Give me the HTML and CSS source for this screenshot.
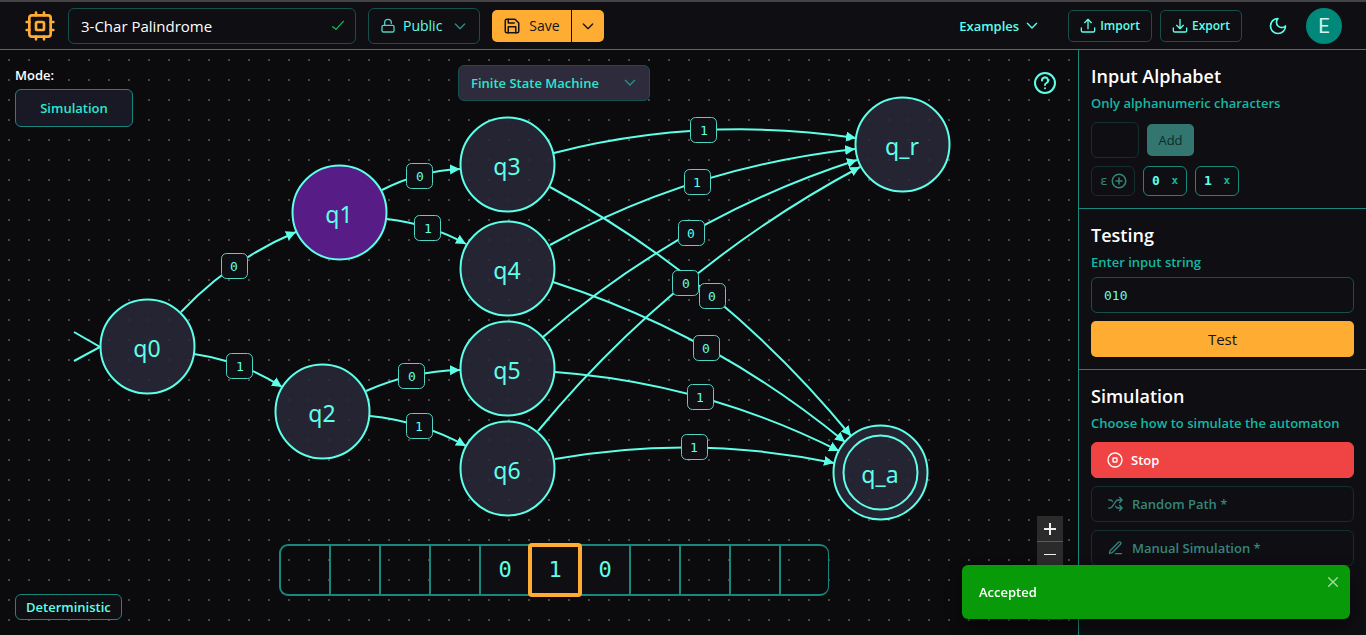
FILE: index.html
```html
<!DOCTYPE html>
<html lang="en">
<head>
<meta charset="utf-8">
<meta name="viewport" content="width=device-width, initial-scale=1">
<title>3-Char Palindrome</title>
<link rel="stylesheet" href="styles.css">
</head>
<body>
<header class="topbar">
  <svg class="icon logo" width="32" height="32" viewBox="0 0 24 24"><rect x="4" y="4" width="16" height="16" rx="2"/><rect x="9" y="9" width="6" height="6" rx="1"/><path d="M15 2v2M15 20v2M2 15h2M2 9h2M20 15h2M20 9h2M9 2v2M9 20v2"/></svg>
  <div class="field project">
    <input class="input project-name" type="text" value="3-Char Palindrome" aria-label="Project name">
    <svg class="icon field-icon saved" width="16" height="16" viewBox="0 0 24 24"><path d="M20 5 9 17l-5-4"/></svg>
  </div>
  <div class="field">
    <svg class="icon lock" width="16" height="16" viewBox="0 0 24 24"><rect x="3" y="11" width="18" height="10" rx="2"/><path d="M7 11V7a5 5 0 0 1 10 0v1"/></svg>
    <select class="input visibility" aria-label="Visibility"><option>Public</option></select>
    <svg class="icon field-icon dim" width="16" height="16" viewBox="0 0 24 24"><path d="m5 9 7 7 7-7"/></svg>
  </div>
  <div class="split">
    <button class="btn primary save"><svg class="icon" width="18" height="18" viewBox="0 0 24 24"><path d="M5 3h11l5 5v11a2 2 0 0 1-2 2H5a2 2 0 0 1-2-2V5a2 2 0 0 1 2-2z"/><path d="M17 21v-8H7v8M7 3v5h8"/></svg>Save</button>
    <button class="btn primary save-more" aria-label="Save options"><svg class="icon" width="16" height="16" viewBox="0 0 24 24"><path d="m5 9 7 7 7-7"/></svg></button>
  </div>
  <button class="btn examples">Examples<svg class="icon" width="16" height="16" viewBox="0 0 24 24"><path d="m5 8 7 7 7-7"/></svg></button>
  <div class="transfer">
    <button class="btn outline"><svg class="icon" width="16" height="16" viewBox="0 0 24 24"><path d="M22 15v4a2 2 0 0 1-2 2H4a2 2 0 0 1-2-2v-4M17 7l-5-5-5 5M12 3v13"/></svg>Import</button>
    <button class="btn outline"><svg class="icon" width="16" height="16" viewBox="0 0 24 24"><path d="M22 15v4a2 2 0 0 1-2 2H4a2 2 0 0 1-2-2v-4M7 11l5 5 5-5M12 15V2"/></svg>Export</button>
  </div>
  <button class="btn theme" aria-label="Toggle theme"><svg class="icon" width="20" height="20" viewBox="0 0 24 24"><path d="M12 3a6 6 0 0 0 9 9 9 9 0 1 1-9-9Z"/></svg></button>
  <button class="avatar" aria-label="Account">E</button>
</header>

<div class="workspace">
  <main class="canvas">
    <svg class="graph" width="100%" height="100%" role="img" aria-label="State diagram">
      <defs>
        <marker id="arrow" markerUnits="userSpaceOnUse" markerWidth="12" markerHeight="12" refX="10" refY="5" orient="auto"><path class="tip" d="M0 0 10 5 0 10z"/></marker>
      </defs>
      <g transform="translate(0 -50)">
        <path class="line" d="M74 332 100 347 74 361"/>
        <g class="edges">
          <path d="M181 312Q230 260 296 232"/>
          <path d="M194 354Q242 361 282 387"/>
          <path d="M382 190Q419 171 460 169"/>
          <path d="M387 219Q430 224 466 244"/>
          <path d="M366 391Q411 371 460 370"/>
          <path d="M370 416Q420 421 466 446"/>
          <path d="M554 153Q702 115 856 138"/>
          <path d="M550 245Q692 167 855 149"/>
          <path d="M543 337Q683 216 857 160"/>
          <path d="M538 431Q673 267 860 167"/>
          <path d="M550 187Q724 281 851 436"/>
          <path d="M553 282Q714 334 845 442"/>
          <path d="M555 372Q704 383 839 451"/>
          <path d="M555 459Q694 434 834 463"/>
        </g>
        <g class="states">
          <circle cx="147.500" cy="346.500" r="47"/><text x="147" y="357">q0</text>
          <circle class="active" cx="339.500" cy="212.500" r="47"/><text x="339" y="223">q1</text>
          <circle cx="322.500" cy="411.500" r="47"/><text x="322" y="422">q2</text>
          <circle cx="507.500" cy="164.500" r="47"/><text x="507" y="175">q3</text>
          <circle cx="507.500" cy="268.500" r="47"/><text x="507" y="279">q4</text>
          <circle cx="507.500" cy="368.500" r="47"/><text x="507" y="379">q5</text>
          <circle cx="507.500" cy="468.500" r="47"/><text x="507" y="479">q6</text>
          <circle cx="902.500" cy="144.500" r="47"/><text x="902" y="155">q_r</text>
          <circle cx="880.500" cy="472.500" r="47"/><circle class="accept" cx="880.500" cy="472.500" r="37"/><text x="880" y="483">q_a</text>
        </g>
        <g class="labels">
          <rect x="221.500" y="253.500" width="26" height="25" rx="5"/><text x="234" y="271">0</text>
          <rect x="226.500" y="353.500" width="26" height="25" rx="5"/><text x="240" y="371">1</text>
          <rect x="406.500" y="163.500" width="26" height="25" rx="5"/><text x="420" y="181">0</text>
          <rect x="414.500" y="215.500" width="26" height="25" rx="5"/><text x="428" y="233">1</text>
          <rect x="398.500" y="363.500" width="26" height="25" rx="5"/><text x="412" y="381">0</text>
          <rect x="406.500" y="413.500" width="26" height="25" rx="5"/><text x="419" y="431">1</text>
          <rect x="690.500" y="117.500" width="26" height="25" rx="5"/><text x="704" y="135">1</text>
          <rect x="684.500" y="169.500" width="26" height="25" rx="5"/><text x="697" y="187">1</text>
          <rect x="678.500" y="220.500" width="26" height="25" rx="5"/><text x="691" y="238">0</text>
          <rect x="672.500" y="270.500" width="26" height="25" rx="5"/><text x="686" y="288">0</text>
          <rect x="699.500" y="283.500" width="26" height="25" rx="5"/><text x="712" y="301">0</text>
          <rect x="693.500" y="335.500" width="26" height="25" rx="5"/><text x="706" y="353">0</text>
          <rect x="687.500" y="384.500" width="26" height="25" rx="5"/><text x="700" y="402">1</text>
          <rect x="681.500" y="434.500" width="26" height="25" rx="5"/><text x="694" y="452">1</text>
        </g>
      </g>
    </svg>

    <div class="overlay">
      <div class="mode">
        <span class="mode-label">Mode:</span>
        <button class="btn mode-btn">Simulation</button>
      </div>
      <div class="field machine">
        <select class="input machine-select" aria-label="Machine type"><option>Finite State Machine</option></select>
        <svg class="icon field-icon dim" width="16" height="16" viewBox="0 0 24 24"><path d="m5 8 7 7 7-7"/></svg>
      </div>
      <button class="btn help" aria-label="Help"><svg class="icon" width="24" height="24" viewBox="0 0 24 24"><circle cx="12" cy="12" r="10"/><path d="M9 9.500a3 3 0 1 1 4.500 2.500c-1 .6-1.500 1-1.500 2M12 17.200v.1"/></svg></button>

      <span class="badge">Deterministic</span>
      <div class="tape">
        <span class="cell"></span><span class="cell"></span><span class="cell"></span><span class="cell"></span>
        <span class="cell filled">0</span><span class="cell filled head">1</span><span class="cell filled">0</span>
        <span class="cell"></span><span class="cell"></span><span class="cell"></span><span class="cell"></span>
      </div>
      <div class="zoom">
        <button class="zoom-btn" aria-label="Zoom in"><svg width="12" height="12" viewBox="0 0 12 12"><path d="M6 0v12M0 6h12"/></svg></button>
        <button class="zoom-btn" aria-label="Zoom out"><svg width="12" height="12" viewBox="0 0 12 12"><path class="thin" d="M0 5.500h12"/></svg></button>
        <button class="zoom-btn" aria-label="Fit view"></button>
        <button class="zoom-btn" aria-label="Lock"></button>
      </div>
    </div>
  </main>

  <aside class="sidebar">
    <section class="section">
      <h2 class="heading">Input Alphabet</h2>
      <label class="hint" for="symbol">Only alphanumeric characters</label>
      <div class="row">
        <input class="input symbol" id="symbol" type="text" maxlength="1">
        <button class="btn add">Add</button>
      </div>
      <div class="row chips">
        <button class="chip epsilon">ε<svg class="icon" width="18" height="18" viewBox="0 0 24 24"><circle cx="12" cy="12" r="9"/><path d="M12 8v8M8 12h8"/></svg></button>
        <button class="chip">0<span class="remove">x</span></button>
        <button class="chip">1<span class="remove">x</span></button>
      </div>
    </section>
    <section class="section testing">
      <h2 class="heading">Testing</h2>
      <label class="hint" for="word">Enter input string</label>
      <input class="input word" id="word" type="text" value="010">
      <button class="btn primary test">Test</button>
    </section>
    <section class="section">
      <h2 class="heading">Simulation</h2>
      <p class="hint">Choose how to simulate the automaton</p>
      <div class="actions">
        <button class="btn action stop"><svg class="icon" width="16" height="16" viewBox="0 0 24 24"><circle cx="12" cy="12" r="10.500"/><rect x="9" y="9" width="6" height="6" rx="1"/></svg>Stop</button>
        <button class="btn action"><svg class="icon" width="17" height="16" viewBox="0 0 24 24"><path d="M2 18h1.400c1.300 0 2.500-.6 3.300-1.700l6.100-8.600c.7-1.100 2-1.700 3.300-1.700H22M18 2l4 4-4 4M2 6h1.900c1.500 0 2.900.9 3.600 2.200M22 18h-5.900c-1.300 0-2.600-.7-3.300-1.800l-.5-.8M18 14l4 4-4 4"/></svg>Random Path *</button>
        <button class="btn action"><svg class="icon" width="17" height="16" viewBox="0 0 24 24"><path d="M12 20.500h9M16.500 3.500a2.100 2.100 0 0 1 3 3L7 19l-4 1 1-4Z"/></svg>Manual Simulation *</button>
      </div>
    </section>
  </aside>
</div>

<div class="toast" role="status">
  <span>Accepted</span>
  <button class="close" aria-label="Dismiss"><svg class="icon" width="16" height="16" viewBox="0 0 24 24"><path d="M18.500 5.500l-13 13M5.500 5.500l13 13"/></svg></button>
</div>
</body>
</html>
```
FILE: styles.css
```css
:root {
  --bg: #0b0b0d;
  --panel: #0e0e13;
  --teal: #5effe8;
  --teal-mid: #14b8a2;
  --line: #1a877c;
  --line-dim: #16504c;
  --orange: #ffac33;
  --mono: "DejaVu Sans Mono", monospace;
}
* { box-sizing: border-box; }
body {
  margin: 0;
  height: 100vh;
  display: flex;
  flex-direction: column;
  overflow: hidden;
  background: var(--bg);
  color: #fff;
  font: 600 13px/20px "Open Sans", "Noto Sans", sans-serif;
}
button, input, select { font: inherit; color: inherit; margin: 0; }
button { cursor: pointer; }
.icon { fill: none; stroke: currentColor; stroke-width: 2; stroke-linecap: round; stroke-linejoin: round; flex: none; }

.btn {
  display: flex;
  align-items: center;
  justify-content: center;
  border: 0;
  border-radius: 5px;
  padding: 0;
  background: none;
  color: var(--teal);
}
.primary { background: var(--orange); color: #14141a; }
.input {
  min-width: 0;
  width: 100%;
  height: 36px;
  border: 1px solid var(--line-dim);
  border-radius: 6px;
  background: transparent;
  padding: 0 12px;
  outline: 0;
}
select.input { appearance: none; }

.field { display: grid; align-items: center; }
.field > * { grid-area: 1 / 1; }
.field-icon { justify-self: end; margin-right: 12px; pointer-events: none; }
.dim { color: #2c8f85; }

/* top bar */
.topbar {
  display: flex;
  align-items: center;
  gap: 12px;
  padding: 6px 24px 5px;
  border-top: 2px solid #444446;
  border-bottom: 1px solid var(--line);
  background: var(--panel);
}
.logo { color: var(--orange); }
.project { width: 288px; }
.project-name { font-size: 15px; font-weight: 400; }
.saved { color: #1fb455; margin-right: 10px; }
.lock { margin-left: 12px; color: #4fcfc0; }
.visibility { width: 112px; padding-left: 34px; font-size: 14px; font-weight: 400; color: var(--teal); }
.split { display: flex; gap: 1px; }
.save { width: 79px; height: 32px; gap: 8px; font-size: 14px; font-weight: 400; border-radius: 5px 0 0 5px; }
.save-more { width: 32px; height: 32px; border-radius: 0 5px 5px 0; }
.examples { margin-left: auto; gap: 5px; }
.transfer { display: flex; gap: 8px; margin-left: 16px; }
.outline { height: 32px; padding: 0 11px; gap: 4px; border: 1px solid var(--line-dim); font-size: 12px; }
.theme { width: 32px; height: 32px; margin-left: 8px; }
.avatar {
  width: 36px;
  height: 36px;
  border: 0;
  border-radius: 50%;
  padding: 0;
  background: #00897b;
  color: #d9f0ed;
  font: 400 20px/36px Roboto, sans-serif;
}

/* workspace */
.workspace { flex: 1; min-height: 0; display: flex; }
.canvas {
  position: relative;
  flex: 1;
  min-width: 0;
  background-color: var(--bg);
  background-image: linear-gradient(var(--bg) 18px, transparent 18px), linear-gradient(90deg, #4a4a4c 2px, var(--bg) 2px);
  background-size: 20px 20px;
  background-position: 8px -9px, 8px 0;
}
.graph { position: absolute; inset: 0; }
.line, .edges path { fill: none; stroke: var(--teal); stroke-width: 2; }
.edges path { marker-end: url(#arrow); }
.graph .tip { fill: var(--teal); stroke: none; marker: none; }
.states circle { fill: #2a293a; fill-opacity: .86; stroke: var(--teal); stroke-width: 2; }
.states .active { fill: #581c87; fill-opacity: 1; }
.states .accept { fill: none; }
.states text { fill: var(--teal); font: 400 23px "Noto Sans", sans-serif; text-anchor: middle; }
.labels rect { fill: var(--panel); stroke: #4fd5c4; stroke-width: 1; }
.labels text { fill: var(--teal); font: 400 13px var(--mono); text-anchor: middle; }

.overlay {
  position: absolute;
  inset: 0;
  display: grid;
  grid-template-columns: 1fr auto 1fr;
  grid-template-rows: 1fr auto;
  padding: 15px 15px 15px 45px;
}
.mode { margin-left: -30px; justify-self: start; align-self: start; }
.mode-label { display: block; line-height: 20px; margin-bottom: 4px; }
.mode-btn { width: 118px; height: 38px; border: 1px solid var(--line); border-radius: 6px; background: #191825; color: #2ee6cf; }
.machine { justify-self: center; align-self: start; }
.machine-select { width: 192px; background: #2d2b3c; color: #2ee6cf; }
.help { justify-self: end; align-self: start; margin: 6px 6px 0 0; }
.badge {
  justify-self: start;
  align-self: end;
  margin-left: -30px;
  padding: 2px 10px;
  border: 1px solid var(--line);
  border-radius: 6px;
  background: var(--panel);
  color: var(--teal);
}
.tape { display: flex; align-self: end; margin-bottom: 24px; }
.cell {
  width: 50px;
  height: 52px;
  border: 2px solid var(--line);
  border-right-width: 0;
  display: grid;
  place-items: center;
  color: var(--teal);
  font: 400 22px/28px var(--mono);
}
.cell:first-child { border-radius: 9px 0 0 9px; }
.cell:last-child { border-right-width: 1px; border-radius: 0 9px 9px 0; }
.filled { background: var(--panel); }
.head {
  width: 52px;
  margin-right: -2px;
  border-color: transparent;
  border-right-width: 2px;
  border-radius: 3px;
  outline: 4px solid var(--orange);
  outline-offset: -3px;
  z-index: 1;
}
.zoom { justify-self: end; align-self: end; }
.zoom-btn {
  display: grid;
  place-items: center;
  width: 26px;
  height: 26px;
  padding: 0;
  border: 0;
  border-bottom: 1px solid #5a5a5a;
  background: #2b2b2b;
}
.zoom-btn path { stroke: #eee; stroke-width: 2; }
.zoom-btn .thin { stroke-width: 1; }
.zoom-btn:last-child { border-bottom: 0; }

/* sidebar */
.sidebar { width: 288px; border-left: 1px solid var(--line); background: var(--panel); }
.section { padding: 12px; border-bottom: 1px solid var(--line); }
.section:last-child { border-bottom: 0; }
.heading { margin: 0 0 2px; font-size: 18px; font-weight: 600; line-height: 28px; }
.hint { display: block; margin: 0 0 8px; line-height: 22px; color: var(--teal-mid); }
.testing .hint { margin-bottom: 4px; }
.row { display: flex; align-items: center; gap: 8px; }
.symbol { width: 48px; border-color: #13302f; }
.add { width: 47px; height: 32px; background: #33766f; color: #10282a; font-size: 13px; font-weight: 400; }
.chips { margin-top: 8px; }
.chip {
  display: flex;
  align-items: center;
  justify-content: space-between;
  width: 44px;
  height: 30px;
  padding: 0 8px;
  border: 1px solid var(--line);
  border-radius: 6px;
  background: none;
  color: var(--teal);
  font: 700 13px/20px var(--mono);
}
.remove { color: var(--teal-mid); font-size: 11px; }
.epsilon { border-color: #13302f; color: #35857c; font-weight: 400; padding: 0 6px 0 8px; }
.word { font: 400 13px var(--mono); color: var(--teal); }
.test { width: 100%; height: 36px; margin-top: 8px; font-size: 15px; font-weight: 400; }
.actions { display: grid; gap: 8px; }
.action { width: 100%; height: 36px; justify-content: flex-start; gap: 8px; padding: 0 15px; border: 1px solid #13302f; border-radius: 6px; color: #35857c; }
.stop { background: #f04444; border-color: #f04444; color: #fff; }

/* notification */
.toast {
  position: fixed;
  right: 16px;
  bottom: 16px;
  width: 388px;
  max-width: calc(100vw - 32px);
  height: 54px;
  display: flex;
  align-items: center;
  justify-content: space-between;
  padding: 0 9px 0 17px;
  border-radius: 6px;
  background: #089a08;
  box-shadow: 0 8px 16px rgba(0, 0, 0, .4);
}
.close { align-self: flex-start; margin-top: 9px; width: 16px; height: 16px; padding: 0; border: 0; background: none; color: #a5dba5; line-height: 0; }
```
